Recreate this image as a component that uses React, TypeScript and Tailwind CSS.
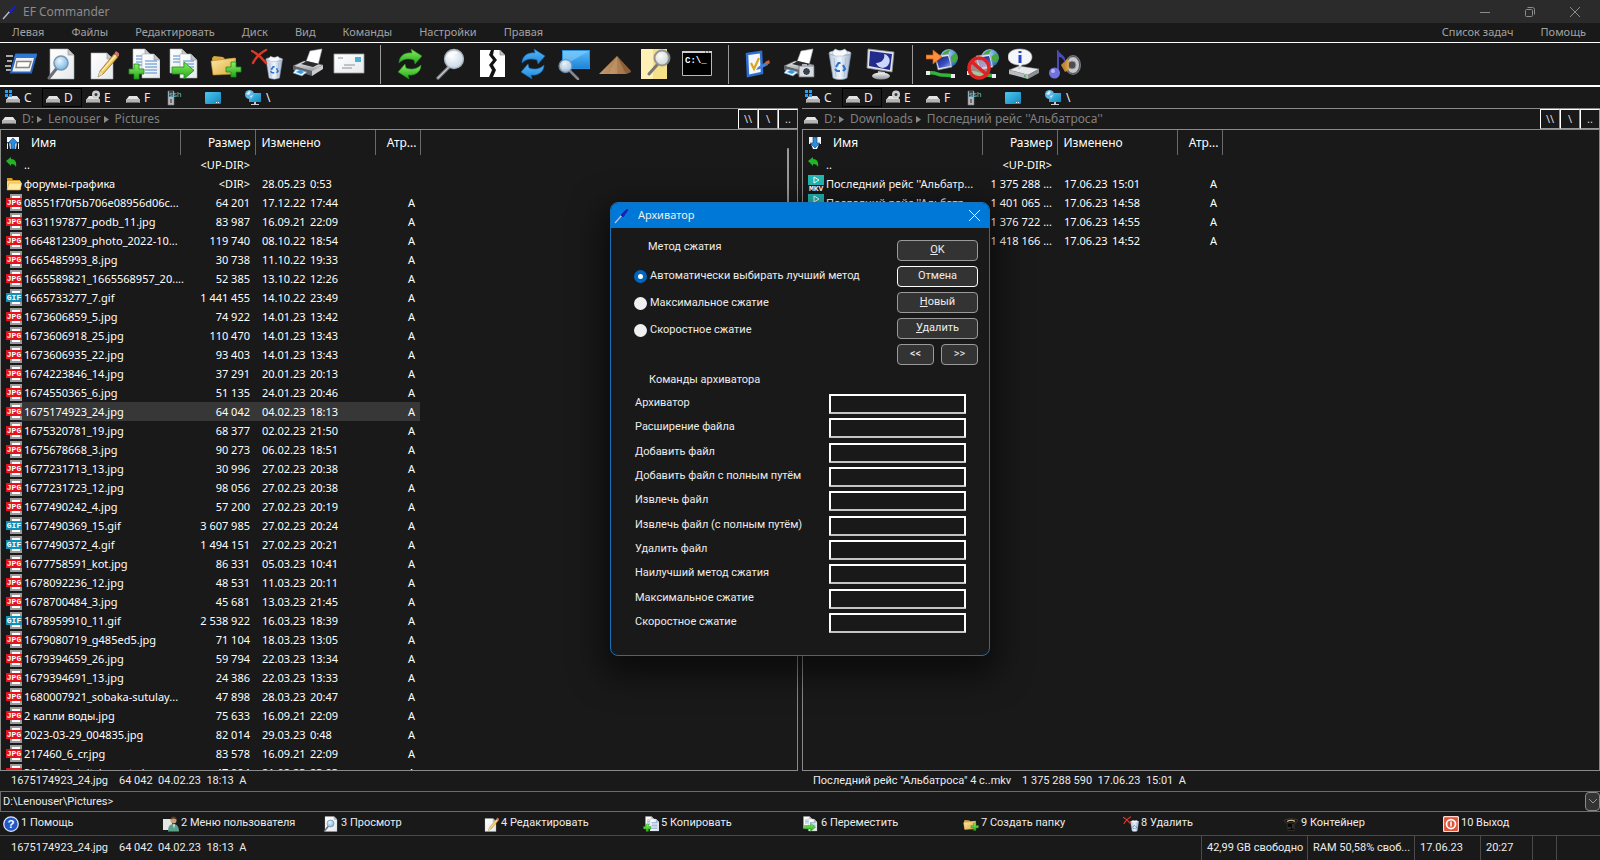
import type { ReactNode } from "react";
import { clsx } from "clsx";

type FileKind = "up" | "dir" | "jpg" | "gif" | "mkv";

interface FileRow {
  kind: FileKind;
  name: string;
  size: string;
  date?: string;
  time?: string;
  attr?: string;
  selected?: boolean;
}

const file = (name: string, size: string, date: string, time: string): FileRow => ({
  kind: name.endsWith(".gif") ? "gif" : "jpg",
  name,
  size,
  date,
  time,
  attr: "A",
});

const LEFT_FILES: FileRow[] = [
  { kind: "up", name: "..", size: "<UP-DIR>" },
  { kind: "dir", name: "форумы-графика", size: "<DIR>", date: "28.05.23", time: "0:53" },
  file("08551f70f5b706e08956d06c...", "64 201", "17.12.22", "17:44"),
  file("1631197877_podb_11.jpg", "83 987", "16.09.21", "22:09"),
  file("1664812309_photo_2022-10...", "119 740", "08.10.22", "18:54"),
  file("1665485993_8.jpg", "30 738", "11.10.22", "19:33"),
  file("1665589821_1665568957_20....", "52 385", "13.10.22", "12:26"),
  file("1665733277_7.gif", "1 441 455", "14.10.22", "23:49"),
  file("1673606859_5.jpg", "74 922", "14.01.23", "13:42"),
  file("1673606918_25.jpg", "110 470", "14.01.23", "13:43"),
  file("1673606935_22.jpg", "93 403", "14.01.23", "13:43"),
  file("1674223846_14.jpg", "37 291", "20.01.23", "20:13"),
  file("1674550365_6.jpg", "51 135", "24.01.23", "20:46"),
  { ...file("1675174923_24.jpg", "64 042", "04.02.23", "18:13"), selected: true },
  file("1675320781_19.jpg", "68 377", "02.02.23", "21:50"),
  file("1675678668_3.jpg", "90 273", "06.02.23", "18:51"),
  file("1677231713_13.jpg", "30 996", "27.02.23", "20:38"),
  file("1677231723_12.jpg", "98 056", "27.02.23", "20:38"),
  file("1677490242_4.jpg", "57 200", "27.02.23", "20:19"),
  file("1677490369_15.gif", "3 607 985", "27.02.23", "20:24"),
  file("1677490372_4.gif", "1 494 151", "27.02.23", "20:21"),
  file("1677758591_kot.jpg", "86 331", "05.03.23", "10:41"),
  file("1678092236_12.jpg", "48 531", "11.03.23", "20:11"),
  file("1678700484_3.jpg", "45 681", "13.03.23", "21:45"),
  file("1678959910_11.gif", "2 538 922", "16.03.23", "18:39"),
  file("1679080719_g485ed5.jpg", "71 104", "18.03.23", "13:05"),
  file("1679394659_26.jpg", "59 794", "22.03.23", "13:34"),
  file("1679394691_13.jpg", "24 386", "22.03.23", "13:33"),
  file("1680007921_sobaka-sutulay...", "47 898", "28.03.23", "20:47"),
  file("2 капли воды.jpg", "75 633", "16.09.21", "22:09"),
  file("2023-03-29_004835.jpg", "82 014", "29.03.23", "0:48"),
  file("217460_6_cr.jpg", "83 578", "16.09.21", "22:09"),
  file("304361_krinitska_nata.jpg", "47 994", "21.02.23", "23:03"),
];

const mkv = (size: string, time: string): FileRow => ({
  kind: "mkv",
  name: "Последний рейс ''Альбатр...",
  size,
  date: "17.06.23",
  time,
  attr: "A",
});

const RIGHT_FILES: FileRow[] = [
  { kind: "up", name: "..", size: "<UP-DIR>" },
  mkv("1 375 288 ...", "15:01"),
  mkv("1 401 065 ...", "14:58"),
  mkv("1 376 722 ...", "14:55"),
  mkv("1 418 166 ...", "14:52"),
];

/* ---------- icons ---------- */

function Svg({ size = 32, children }: { size?: number; children: ReactNode }) {
  return (
    <svg width={size} height={size} viewBox="0 0 32 32" aria-hidden="true" className="shrink-0">
      {children}
    </svg>
  );
}

function Defs() {
  return (
    <svg width="0" height="0" className="absolute" aria-hidden="true">
      <defs>
        <linearGradient id="paper" x1="0" y1="0" x2="1" y2="1">
          <stop offset="0" stopColor="#ffffff" />
          <stop offset="1" stopColor="#e6e9ec" />
        </linearGradient>
        <radialGradient id="lens" cx="0.4" cy="0.35" r="0.7">
          <stop offset="0" stopColor="#ffffff" />
          <stop offset="1" stopColor="#c3d3e2" />
        </radialGradient>
        <radialGradient id="lensBlue" cx="0.4" cy="0.35" r="0.7">
          <stop offset="0" stopColor="#e8f6ff" />
          <stop offset="1" stopColor="#6fb2e2" />
        </radialGradient>
        <linearGradient id="green" x1="0" y1="0" x2="0" y2="1">
          <stop offset="0" stopColor="#8df05e" />
          <stop offset="1" stopColor="#1fa51d" />
        </linearGradient>
        <linearGradient id="blue" x1="0" y1="0" x2="0" y2="1">
          <stop offset="0" stopColor="#58baf8" />
          <stop offset="1" stopColor="#1f84d8" />
        </linearGradient>
        <linearGradient id="folder" x1="0" y1="0" x2="1" y2="1">
          <stop offset="0" stopColor="#ffeaa8" />
          <stop offset="1" stopColor="#d9a93c" />
        </linearGradient>
        <linearGradient id="metal" x1="0" y1="0" x2="0" y2="1">
          <stop offset="0" stopColor="#f5f5f5" />
          <stop offset="1" stopColor="#8d8f92" />
        </linearGradient>
        <linearGradient id="bin" x1="0" y1="0" x2="1" y2="0">
          <stop offset="0" stopColor="#b8c8dc" />
          <stop offset="0.5" stopColor="#eef4fa" />
          <stop offset="1" stopColor="#9db0c8" />
        </linearGradient>
        <radialGradient id="globe" cx="0.35" cy="0.3" r="0.8">
          <stop offset="0" stopColor="#b6e4ff" />
          <stop offset="1" stopColor="#165fae" />
        </radialGradient>
        <linearGradient id="screen" x1="0" y1="0" x2="1" y2="1">
          <stop offset="0" stopColor="#141a6e" />
          <stop offset="0.6" stopColor="#3a4fc0" />
          <stop offset="1" stopColor="#a8b6f5" />
        </linearGradient>
        <linearGradient id="mountain" x1="0" y1="0" x2="1" y2="0">
          <stop offset="0" stopColor="#c69a6a" />
          <stop offset="1" stopColor="#9b6d42" />
        </linearGradient>
        <linearGradient id="cyan" x1="0" y1="0" x2="1" y2="1">
          <stop offset="0" stopColor="#4fc8ee" />
          <stop offset="1" stopColor="#1186bd" />
        </linearGradient>
      </defs>
    </svg>
  );
}

const Page = ({ x = 4, y = 1, w = 24, h = 30 }) => (
  <g>
    <path d={`M${x} ${y}h${w - 6}l6 6v${h - 6}h-${w}z`} fill="url(#paper)" stroke="#a9adb3" strokeWidth="0.6" />
    <path d={`M${x + w - 6} ${y}v6h6z`} fill="#c3c7cc" stroke="#8d9196" strokeWidth="0.6" />
  </g>
);

const TextLines = ({ x, y, w, n }: { x: number; y: number; w: number; n: number }) => (
  <g stroke="#4f8ad0" strokeWidth="1">
    {Array.from({ length: n }, (_, i) => (
      <path key={i} d={`M${x} ${y + i * 3}h${w}`} />
    ))}
  </g>
);

const Plus = ({ x, y }: { x: number; y: number }) => (
  <path
    d={`M${x + 5} ${y}h5v5h5v5h-5v5h-5v-5h-5v-5h5z`}
    fill="url(#green)"
    stroke="#1c8a1a"
    strokeWidth="0.8"
  />
);

const ArrowR = () => (
  <path d="M3 19h12v-5l10 8.500-10 8.500v-5h-12z" fill="url(#green)" stroke="#1c8a1a" strokeWidth="0.8" />
);

const Recycle = ({ x, y }: { x: number; y: number }) => (
  <g transform={`translate(${x} ${y})`} fill="none" stroke="#2f73cf" strokeWidth="2.200">
    <path d="M1 5l2.500-4h2M8 3l2 4-2 2M5 9H2L0 7" />
  </g>
);

const Magnifier = () => (
  <g>
    <path d="M14 19L3 30" stroke="#6c6f73" strokeWidth="3.500" strokeLinecap="round" />
    <path d="M14 19L3 30" stroke="#c9ccd0" strokeWidth="1.300" strokeLinecap="round" />
    <circle cx="19" cy="11" r="9.500" fill="url(#lens)" stroke="#a7adb5" strokeWidth="1.300" />
    <path d="M13 9a7 6 0 0 1 9-4" stroke="#fff" strokeWidth="1.500" fill="none" opacity="0.9" />
  </g>
);

const Refresh = ({ fill, edge }: { fill: string; edge: string }) => (
  <g fill={fill} stroke={edge} strokeWidth="0.6">
    <path d="M5 15C5 8 11 4 18 5l-1-4 11 7-7 8-1-4c-6-2-11-1-15 3z" />
    <path d="M27 17c0 7-6 11-13 10l1 4-11-7 7-8 1 4c6 2 11 1 15-3z" />
  </g>
);

const Printer = () => (
  <g>
    <path d="M18 3l12-2-4 16-12-3z" fill="#fff" stroke="#b3b6ba" strokeWidth="0.6" />
    <path d="M1 18l11-5 19 4-11 7z" fill="url(#metal)" stroke="#5b5e63" strokeWidth="0.6" />
    <path d="M9 16l6-3 12 3-6 3z" fill="#2a2c30" />
    <path d="M1 18l19 5v5L1 22z" fill="#5f6369" />
    <path d="M20 23l11-6v4l-11 7z" fill="#c9ccd0" />
    <path d="M4 21l11 3-5 4-9-3z" fill="#eaf5ff" stroke="#5b8ec2" strokeWidth="0.6" />
    <path d="M4 24l4-2 4 2-3 2z" fill="#2e9ce0" />
  </g>
);

const Bin = ({ x = 6, y = 2, s = 1 }) => (
  <g transform={`translate(${x} ${y}) scale(${s})`}>
    <path d="M0 3h22l-4 25c-4 2-10 2-14 0z" fill="url(#bin)" stroke="#8798ad" strokeWidth="0.7" />
    <ellipse cx="11" cy="3" rx="11" ry="2.500" fill="#dfe9f3" stroke="#8fa1b8" strokeWidth="0.8" />
    <path d="M3 3l3-4 5 2 5-2 3 4-5 3H6z" fill="#f6f9fc" stroke="#a3b2c4" strokeWidth="0.5" />
    <path d="M5 8l2 19M17 8l-2 19" stroke="#9fb3cb" strokeWidth="0.7" />
    <Recycle x={6} y={12} />
  </g>
);

const Globe = ({ cx, cy, r }: { cx: number; cy: number; r: number }) => (
  <g>
    <circle cx={cx} cy={cy} r={r} fill="url(#globe)" />
    <path
      d={`M${cx - r + 2} ${cy - 3}c2-4 5-5 8-5l-2 4-3 2 1 3-3 1zM${cx + 2} ${cy - 2}l5-3 2 5-3 5-4-3z`}
      fill="#48a83e"
    />
  </g>
);

const NetMonitor = () => (
  <g>
    <Globe cx={23} cy={10} r={9} />
    <path d="M9 8l14-2 3 13-14 3z" fill="#e3e7ee" stroke="#8a93a3" strokeWidth="0.6" />
    <path d="M10 10l12-2 3 10-12 2z" fill="url(#screen)" />
    <path d="M3 25c7-1 8 2 13 2s7 0 10 1" stroke="#2fb53a" strokeWidth="3.500" fill="none" />
    <path d="M0 23h4v4H0zM25 26h4v4h-4z" fill="#e9ecef" />
  </g>
);

const UserWindow = () => (
  <g>
    <path d="M1 8h7M2 13h5M0 18h6M1 22h5" stroke="#dadada" strokeWidth="1.300" />
    <path d="M11 6.500h20l-5 18H6z" fill="#eef3f9" stroke="#2c65b8" strokeWidth="2" />
    <path d="M11 6h21l-1 4H9z" fill="#2f78d8" />
    <path d="M12 13.500h14l-2 6H11z" fill="#fff" stroke="#8b8577" strokeWidth="1.500" />
  </g>
);

const EditPage = () => (
  <g>
    <Page x={4} y={5} w={22} h={26} />
    <path d="M13 23L27 6l4 3-15 17-5 3z" fill="#f2c75c" stroke="#8c6a20" strokeWidth="0.8" />
    <path d="M15 23L29 7" stroke="#fff0b8" strokeWidth="1.200" />
    <path d="M27 6l2-3 4 3-2 3z" fill="#d76a6a" />
    <path d="M13 23l-2 6 5-3z" fill="#e8d9b8" />
  </g>
);

const ViewPage = () => (
  <g>
    <Page />
    <path d="M11 20L3 30" stroke="#6c6f73" strokeWidth="3" strokeLinecap="round" />
    <circle cx="15" cy="15" r="7" fill="url(#lensBlue)" stroke="#7d93ab" strokeWidth="1.500" />
  </g>
);

const CopyPages = () => (
  <g>
    <Page x={5} y={1} w={18} h={24} />
    <TextLines x={8} y={8} w={8} n={4} />
    <Page x={14} y={6} w={18} h={24} />
    <TextLines x={17} y={13} w={12} n={5} />
    <Plus x={1} y={16} />
  </g>
);

const MovePages = () => (
  <g>
    <Page x={1} y={1} w={18} h={24} />
    <TextLines x={4} y={8} w={8} n={3} />
    <Page x={11} y={6} w={17} h={24} />
    <TextLines x={14} y={13} w={11} n={4} />
    <ArrowR />
  </g>
);

const NewFolder = () => (
  <g>
    <path d="M2 10l2-2 9 1 2 2 11-1v14L4 27z" fill="#d9a93c" />
    <path d="M1 13l24-3v16L3 27z" fill="url(#folder)" stroke="#b88b2c" strokeWidth="0.6" />
    <Plus x={16} y={14} />
  </g>
);

const DeleteBin = () => (
  <g>
    <Bin x={15} y={9} s={0.75} />
    <path d="M1 3c6 3 10 7 14 12M15 2C9 5 5 9 2 15" stroke="#d83a26" strokeWidth="2.500" fill="none" strokeLinecap="round" />
  </g>
);

const Envelope = () => (
  <g>
    <path d="M1 6h30v19H1z" fill="url(#paper)" stroke="#9a9da1" strokeWidth="0.8" />
    <path d="M22 9h6v5h-6z" fill="#46b3d6" />
    <path d="M5 10h5M11 17h11M9 20h10" stroke="#8d9298" strokeWidth="1" />
    <path d="M0 8h1M0 12h1M0 16h1M0 20h1" stroke="#555" />
  </g>
);

const SplitPage = () => (
  <g>
    <path d="M4 2h11l-2 5 4 5-4 5 3 5-3 7H4z" fill="#fff" />
    <path d="M18 2h6l5 5v22H17l3-7-3-5 4-5-4-5z" fill="#fff" />
    <path d="M24 2v5h5z" fill="#c3c7cc" stroke="#777" strokeWidth="0.6" />
    <path d="M16 2l-1 5 4 5-4 5 3 5-3 7" stroke="#111" strokeWidth="1.800" fill="none" />
  </g>
);

const ScreenSearch = () => (
  <g>
    <path d="M4 2h28v19H4z" fill="#2b8fe0" />
    <path d="M5 3h26v17H5z" fill="url(#blue)" />
    <path d="M5 3h26L5 18z" fill="#8fd4ff" opacity="0.5" />
    <path d="M12 23l8 8" stroke="#85888d" strokeWidth="2.500" strokeLinecap="round" />
    <circle cx="7.500" cy="18" r="6.500" fill="url(#lens)" opacity="0.85" stroke="#6f97bd" strokeWidth="1.300" />
  </g>
);

const Mountain = () => (
  <g>
    <path d="M0 26L18 8l14 16-5 2z" fill="url(#mountain)" />
    <path d="M18 8l14 15-5 3z" fill="#8a5f3a" />
    <path d="M18 8l-8 18h8z" fill="#d0a67a" opacity="0.4" />
  </g>
);

const NoteSearch = () => (
  <g>
    <path d="M1 1h26v30H1z" fill="#f7e08a" />
    <path d="M1 1h12v30H1z" fill="#fff0b5" />
    <path d="M17 17L9 26" stroke="#777" strokeWidth="3" strokeLinecap="round" />
    <circle cx="22" cy="10" r="7.500" fill="url(#lens)" opacity="0.9" stroke="#8d8f93" strokeWidth="2" />
  </g>
);

const Console = () => (
  <g>
    <path d="M1.500 3.500h29v24h-29z" fill="#000" stroke="#b9b9b9" />
    <path d="M1 3h30v2H1z" fill="#d0d0d0" />
    <path d="M24 4h1M27 4h1" stroke="#333" />
    <text x="4" y="15" fontSize="9" fill="#fff" fontFamily="Liberation Mono, monospace" fontWeight="bold">C:\_</text>
  </g>
);

const Checklist = () => (
  <g>
    <path d="M5 6l14-2 1 21-14 3z" fill="#f4f7fb" stroke="#2f6fd0" strokeWidth="2.500" />
    <path d="M9 15l3 6 5-11" fill="none" stroke="#d9a520" strokeWidth="2.200" />
    <path d="M16 19l8-5 2 3-8 4-4 1z" fill="#3f82d8" />
    <path d="M23 14l4-2 1 3-3 2z" fill="#d05c3a" />
  </g>
);

const PrinterCamera = () => (
  <g>
    <Printer />
    <path d="M16 18h15v11H16z" fill="#d8dce2" stroke="#6a6e75" strokeWidth="0.8" />
    <circle cx="23.500" cy="23.500" r="4" fill="#3a424e" stroke="#fff" strokeWidth="1" />
    <path d="M19 16h5v2h-5z" fill="#aeb3ba" />
  </g>
);

const MoonMonitor = () => (
  <g>
    <path d="M3 1l26 3-2 20-25-4z" fill="#e3e6ea" stroke="#8b8f96" strokeWidth="0.8" />
    <path d="M5 3l22 3-2 16-21-4z" fill="#232b8c" />
    <path d="M19 6a7 7 0 1 1-8 9 8 7 0 0 0 8-9z" fill="#cdd6fb" />
    <path d="M13 23l7 1v3h-7z" fill="#b8bcc2" />
    <ellipse cx="16" cy="28" rx="9" ry="3.500" fill="url(#metal)" />
  </g>
);

const Connect = () => (
  <g>
    <NetMonitor />
    <path d="M0 7h7V2l9 7-9 7v-5H0z" fill="#ff8d3a" stroke="#c65a12" strokeWidth="0.7" />
  </g>
);

const Disconnect = () => (
  <g>
    <NetMonitor />
    <circle cx="12" cy="20" r="10" fill="#f6d2d2" fillOpacity="0.6" stroke="#dd2323" strokeWidth="3.500" />
    <path d="M5 14l14 12" stroke="#dd2323" strokeWidth="3.500" />
  </g>
);

const DiskInfo = () => (
  <g>
    <path d="M1 22l10-4 20 3-11 6z" fill="#e7e9eb" stroke="#888" strokeWidth="0.5" />
    <path d="M1 22l19 5v4L1 26z" fill="#b9bdc1" />
    <path d="M20 27l11-6v4l-11 6z" fill="#8b9094" />
    <path d="M16 27l2 .5v2l-2-.5z" fill="#3cc23c" />
    <path d="M12 1c7 0 12 3 12 8s-5 8-10 8l-3 4v-4C5 17 0 14 0 9s5-8 12-8z" fill="#f4f6f8" stroke="#a4a8ad" strokeWidth="0.6" />
    <path d="M12 3v2M12 7v8" stroke="#2746c8" strokeWidth="3" />
  </g>
);

const Sound = () => (
  <g>
    <ellipse cx="24" cy="17" rx="8" ry="10" fill="#77797d" />
    <ellipse cx="24" cy="17" rx="6.500" ry="8.500" fill="#c6c8cb" stroke="#4e5054" />
    <circle cx="23" cy="17" r="4" fill="#4b4d50" stroke="#999" />
    <path d="M12 17l6-6 2 2v9l-4 2z" fill="#e6a33c" opacity="0.8" />
    <path d="M9 2c2 5 9 5 7 13-1-4-4-6-6-6v16H8V2z" fill="#4a4ab8" />
    <circle cx="5.500" cy="25" r="5.500" fill="#7272dd" />
    <circle cx="4" cy="23" r="2" fill="#b8b8ff" />
  </g>
);

const TOOLBAR: { label: string; icon: ReactNode }[][] = [
  [
    { label: "Меню", icon: <UserWindow /> },
    { label: "Просмотр", icon: <ViewPage /> },
    { label: "Редактировать", icon: <EditPage /> },
    { label: "Копировать", icon: <CopyPages /> },
    { label: "Переместить", icon: <MovePages /> },
    { label: "Создать папку", icon: <NewFolder /> },
    { label: "Удалить", icon: <DeleteBin /> },
    { label: "Печать", icon: <Printer /> },
    { label: "Почта", icon: <Envelope /> },
  ],
  [
    { label: "Обновить", icon: <Refresh fill="url(#green)" edge="#1c8a1a" /> },
    { label: "Поиск", icon: <Magnifier /> },
    { label: "Разделить", icon: <SplitPage /> },
    { label: "Синхронизация", icon: <Refresh fill="url(#blue)" edge="#1668b4" /> },
    { label: "Экран", icon: <ScreenSearch /> },
    { label: "Упаковать", icon: <Mountain /> },
    { label: "Найти в файлах", icon: <NoteSearch /> },
    { label: "Консоль", icon: <Console /> },
  ],
  [
    { label: "Свойства", icon: <Checklist /> },
    { label: "Снимок", icon: <PrinterCamera /> },
    { label: "Корзина", icon: <Bin x={5} y={2} /> },
    { label: "Заставка", icon: <MoonMonitor /> },
  ],
  [
    { label: "Подключить", icon: <Connect /> },
    { label: "Отключить", icon: <Disconnect /> },
    { label: "О диске", icon: <DiskInfo /> },
    { label: "Звук", icon: <Sound /> },
  ],
];

function DriveIcon({ extra }: { extra?: "win" | "cd" }) {
  return (
    <svg width="16" height="16" viewBox="0 0 16 16" aria-hidden="true" className="shrink-0">
      <path d="M4 6h8l3 4H1z" fill="#e4e4e4" />
      <rect x="1" y="9" width="14" height="4" rx="1" fill="#b4b4b4" />
      <path d="M2 12.500h12" stroke="#6c6c6c" />
      {extra === "win" && <path d="M0 0h3v3H0zM4 0h3v3H4zM0 4h3v3H0zM4 4h3v3H4z" fill="#2a9df4" />}
      {extra === "cd" && (
        <g>
          <circle cx="11" cy="4.500" r="4" fill="#cfcfcf" />
          <circle cx="11" cy="4.500" r="1.500" fill="#3a3a3a" />
        </g>
      )}
    </svg>
  );
}

function FeatherIcon() {
  return (
    <svg width="16" height="16" viewBox="0 0 16 16" aria-hidden="true" className="shrink-0">
      <path d="M1 15l7-8" stroke="#b9bdd8" strokeWidth="1.300" />
      <path d="M7 7l6-6 1 1-5 7z" fill="#1a20b4" stroke="#1a20b4" />
    </svg>
  );
}

function FileIcon({ kind }: { kind: FileKind }) {
  if (kind === "up") {
    return (
      <svg width="16" height="16" viewBox="0 0 16 16" aria-hidden="true">
        <path d="M0 4l5-4v2c4 0 6 3 5 8-1-2-2-3-5-3v2z" fill="#22b422" />
      </svg>
    );
  }
  if (kind === "dir") {
    return (
      <svg width="16" height="16" viewBox="0 0 16 16" aria-hidden="true">
        <path d="M1 2h5l1 2h7v3H1z" fill="#d99a25" />
        <rect x="1" y="5" width="14" height="9" rx="1" fill="#f8d877" />
        <path d="M3 7h13l-2 7H1z" fill="#ffe9a3" stroke="#d9a534" strokeWidth="0.6" />
      </svg>
    );
  }
  if (kind === "mkv") {
    return (
      <svg width="16" height="17" viewBox="0 0 16 17" aria-hidden="true">
        <rect width="16" height="10" fill="#22b8b4" />
        <path d="M6 2l5 3-5 3z" fill="none" stroke="#fff" />
        <text x="1" y="16" fontSize="8" fill="#fff" fontFamily="Liberation Mono, monospace" fontWeight="bold">
          MKV
        </text>
      </svg>
    );
  }
  return (
    <svg width="16" height="17" viewBox="0 0 16 17" aria-hidden="true">
      <path d="M4 0h12v17H4z" fill="#9a9a9a" />
      <path d="M6 2h8v13H6z" fill="#fff" />
      <rect y="4" width="16" height="9" fill={kind === "jpg" ? "#e5131b" : "#1291b8"} />
      <text
        x="8"
        y="11"
        fontSize="8"
        textAnchor="middle"
        fill="#fff"
        fontFamily="Liberation Mono, monospace"
        fontWeight="bold"
      >
        {kind === "jpg" ? "JPG" : "GIF"}
      </text>
    </svg>
  );
}

function SortIcon({ down }: { down?: boolean }) {
  return (
    <svg width="12" height="12" viewBox="0 0 12 12" aria-hidden="true">
      <rect width="12" height="12" fill="#f4f8fc" />
      <path d={down ? "M0 7h2l2 5H0zM12 7h-2l-2 5h4z" : "M0 5h2l1 7H1V7zM12 5h-2l-1 7h2V7z"} fill="#14181e" />
      <path
        d={down ? "M4 0h4v6h3l-5 5-5-5h3z" : "M4 12h4V6h3L6 1 1 6h3z"}
        fill="#2a8de0"
        stroke="#173a6a"
        strokeWidth="0.6"
      />
    </svg>
  );
}

/* ---------- window chrome ---------- */

function TitleBar() {
  return (
    <header className="flex h-[23px] items-center bg-[#2b2b2b] pl-0.5 text-[#8c8c8c]">
      <FeatherIcon />
      <h1 className="ml-[5px] flex-1 text-[12px]">EF Commander</h1>
      <button type="button" aria-label="Свернуть" className="grid h-full w-[45px] place-items-center">
        <svg width="10" height="10" viewBox="0 0 10 10"><path d="M0 5.500h10" stroke="currentColor" /></svg>
      </button>
      <button type="button" aria-label="Восстановить" className="grid h-full w-[45px] place-items-center">
        <svg width="10" height="10" viewBox="0 0 10 10" fill="none" stroke="currentColor">
          <rect x="0.500" y="2.500" width="7" height="7" rx="1" />
          <path d="M2.500 0.500h5a2 2 0 0 1 2 2v5" />
        </svg>
      </button>
      <button type="button" aria-label="Закрыть" className="mr-0.5 grid h-full w-[46px] place-items-center">
        <svg width="10" height="10" viewBox="0 0 10 10"><path d="M0 0l10 10M10 0L0 10" stroke="currentColor" /></svg>
      </button>
    </header>
  );
}

function MenuBar() {
  const left = ["Левая", "Файлы", "Редактировать", "Диск", "Вид", "Команды", "Настройки", "Правая"];
  return (
    <nav className="flex h-[19px] items-center justify-between pl-3 pr-[14px] text-[11px] text-[#a2a2a2]">
      <div className="flex gap-[27px]">
        {left.map((m) => (
          <button key={m} type="button">{m}</button>
        ))}
      </div>
      <div className="flex gap-[27px]">
        <button type="button">Список задач</button>
        <button type="button">Помощь</button>
      </div>
    </nav>
  );
}

function Toolbar() {
  return (
    <div role="toolbar" className="flex h-[45px] items-center border-t border-b-2 border-white">
      {TOOLBAR.map((group, i) => (
        <div key={i} className="flex items-center">
          {i > 0 && <span className="ml-[11px] mr-2 h-[39px] w-px bg-[#9a9a9a]" />}
          {group.map((t) => (
            <button key={t.label} type="button" aria-label={t.label} className="grid h-10 w-[41px] place-items-center">
              <Svg>{t.icon}</Svg>
            </button>
          ))}
        </div>
      ))}
    </div>
  );
}

function DriveBar() {
  const drives = [
    { l: "C", extra: "win" as const },
    { l: "D" },
    { l: "E", extra: "cd" as const },
    { l: "F" },
  ];
  return (
    <div className="flex h-[21px] items-center pl-[2px] text-[12px]">
      {drives.map((d) => (
        <button
          key={d.l}
          type="button"
          className={clsx(
            "flex h-[19px] w-10 items-center gap-[3px] border pl-[2px]",
            d.l === "D" ? "border-black" : "border-transparent",
          )}
        >
          <DriveIcon extra={d.extra} />
          {d.l}
        </button>
      ))}
      <button type="button" aria-label="SSH" className="grid h-[19px] w-6 place-items-center">
        <svg width="16" height="16" viewBox="0 0 16 16">
          <path d="M2 1h6v14H2z" fill="#b4b7bb" stroke="#77797d" strokeWidth="0.600" />
          <path d="M5 9v4" stroke="#55585c" strokeWidth="1.500" />
          <path d="M3 1h4v6H3z" fill="#3f4a52" />
          <text x="3" y="7" fontSize="8" fill="#5cc0ee" fontFamily="Liberation Sans, sans-serif">ssh</text>
        </svg>
      </button>
      <button type="button" aria-label="Рабочий стол" className="ml-[15px] grid h-[19px] w-6 place-items-center">
        <svg width="16" height="14" viewBox="0 0 16 14">
          <rect y="1" width="16" height="12" rx="1" fill="url(#cyan)" />
          <path d="M11 11.500h1M13 11.500h1" stroke="#fff" />
        </svg>
      </button>
      <button type="button" className="ml-5 flex h-[19px] items-center gap-1">
        <svg width="17" height="16" viewBox="0 0 17 16" aria-hidden="true">
          <path d="M4 3h12v9H4z" fill="url(#cyan)" />
          <path d="M9 12h2v2h3v1H6v-1h3z" fill="#c7cbd0" />
          <circle cx="4.500" cy="4.500" r="4.500" fill="#5db4e6" />
          <path d="M1 4l3-3 2 1-2 3zM5 6l3-1-2 3z" fill="#d5eefb" />
        </svg>
        \
      </button>
    </div>
  );
}

function PathBar({ parts }: { parts: string[] }) {
  return (
    <div className="flex h-[22px] items-center border-y border-[#8a8a8a] pl-px text-[12px] text-[#808080]">
      <DriveIcon />
      <div className="ml-[5px] flex flex-1 items-center">
        {parts.map((p, i) => (
          <span key={p} className="flex items-center">
            {i > 0 && (
              <svg width="5" height="7" viewBox="0 0 5 7" aria-hidden="true" className="ml-[3px] mr-[6px]">
                <path d="M0 0l5 3.500L0 7z" fill="#8a8a8a" />
              </svg>
            )}
            {p}
          </span>
        ))}
      </div>
      {["\\\\", "\\", ".."].map((b) => (
        <button
          key={b}
          type="button"
          className="h-5 w-5 border border-[#9a9a9a] border-l-white border-t-white text-center text-[11px] leading-4 text-[#d8d8d8]"
        >
          {b}
        </button>
      ))}
    </div>
  );
}

function FileTable({ rows, down }: { rows: FileRow[]; down?: boolean }) {
  return (
    <table className="w-[419px] table-fixed border-collapse text-[11px] leading-[19px] text-white">
      <colgroup>
        <col className="w-[20px]" />
        <col className="w-[159px]" />
        <col className="w-[75px]" />
        <col className="w-[120px]" />
        <col className="w-[45px]" />
      </colgroup>
      <thead>
        <tr className="h-[25px] text-[12px]">
          <th colSpan={2} className="border-r border-[#6a6a6a] p-0 pl-[6px] font-normal">
            <span className="flex items-center gap-3">
              <SortIcon down={down} />
              Имя
            </span>
          </th>
          <th className="border-r border-[#6a6a6a] p-0 pr-1 text-right font-normal">Размер</th>
          <th className="border-r border-[#6a6a6a] p-0 pl-[6px] text-left font-normal">Изменено</th>
          <th className="border-r border-[#6a6a6a] p-0 pr-[3px] text-right font-normal">Атр...</th>
        </tr>
      </thead>
      <tbody>
        {rows.map((r, i) => (
          <tr
            key={i}
            className={clsx("h-[19px]", r.selected && "[&>td:not(:first-child)]:bg-[#373737]")}
          >
            <td className="p-0 pl-[5px]">
              <FileIcon kind={r.kind} />
            </td>
            <td className="whitespace-nowrap p-0 pl-[3px]">{r.name}</td>
            <td className="whitespace-nowrap p-0 pr-[5px] text-right">{r.size}</td>
            <td className="p-0 pl-[7px]">
              <span className="inline-block w-12">{r.date}</span>
              {r.time}
            </td>
            <td className="p-0 pr-[5px] text-right">{r.attr}</td>
          </tr>
        ))}
      </tbody>
    </table>
  );
}

function Panel({ path, rows, status, right }: { path: string[]; rows: FileRow[]; status: string; right?: boolean }) {
  return (
    <section className="flex min-h-0 min-w-0 flex-1 flex-col">
      <DriveBar />
      <div className={clsx("flex min-h-0 flex-1 flex-col", right ? "pl-0.5" : "pr-0.5")}>
        <PathBar parts={path} />
        <div className="flex min-h-0 flex-1 items-start justify-between overflow-hidden border-x border-b border-[#8a8a8a]">
          <FileTable rows={rows} down={right} />
          {!right && <span className="mr-2 mt-[18px] h-[200px] w-0.5 rounded-full bg-[#9a9a9a]" />}
        </div>
      </div>
      <p
        className={clsx(
          "h-5 whitespace-pre font-['Roboto',sans-serif] text-[11px] leading-5",
          right ? "pl-[13px]" : "pl-[11px]",
        )}
      >
        {status}
      </p>
    </section>
  );
}

/* ---------- bottom bars ---------- */

const FUNCTION_KEYS: { label: string; icon: ReactNode }[] = [
  {
    label: "1 Помощь",
    icon: (
      <g>
        <circle cx="16" cy="16" r="14.500" fill="#2458c8" stroke="#dfe8fa" strokeWidth="2.500" />
        <text x="16" y="24" fontSize="23" textAnchor="middle" fill="#fff" fontFamily="Liberation Sans, sans-serif" fontWeight="bold">?</text>
      </g>
    ),
  },
  {
    label: "2 Меню пользователя",
    icon: (
      <g>
        <path d="M0 6h18v22H0z" fill="#e4e7e4" />
        <circle cx="21" cy="9" r="6" fill="#caa07a" />
        <path d="M15 7c0-8 12-8 12 0l-6-2z" fill="#5a3a22" />
        <path d="M10 31c0-11 4-15 11-15s11 5 11 15z" fill="#5ba08a" />
        <path d="M20 17l2 8 2-8z" fill="#f3f3f3" />
      </g>
    ),
  },
  { label: "3 Просмотр", icon: <ViewPage /> },
  { label: "4 Редактировать", icon: <EditPage /> },
  { label: "5 Копировать", icon: <CopyPages /> },
  { label: "6 Переместить", icon: <MovePages /> },
  { label: "7 Создать папку", icon: <NewFolder /> },
  { label: "8 Удалить", icon: <DeleteBin /> },
  {
    label: "9 Контейнер",
    icon: (
      <g>
        <path d="M2 9c4-4 24-4 28 0l-5 5H7z" fill="#0a0a0a" stroke="#57504a" strokeWidth="1.500" />
        <path d="M8 11c4-3 13-3 16 0" stroke="#d3b88c" strokeWidth="2.500" fill="none" />
        <path d="M8 14h16l-2 15H10z" fill="#080808" stroke="#4a4540" />
        <path d="M10 24h6M20 16v9" stroke="#7b6d5c" strokeWidth="1.500" />
      </g>
    ),
  },
  {
    label: "10 Выход",
    icon: (
      <g>
        <rect x="1" y="1" width="30" height="30" rx="3" fill="#e0543a" stroke="#ffd9cf" strokeWidth="2.500" />
        <circle cx="16" cy="16" r="9" fill="none" stroke="#fff" strokeWidth="3.500" />
        <path d="M16 11v10" stroke="#fff" strokeWidth="3" />
      </g>
    ),
  },
];

function BottomBars() {
  const cell = "flex items-center overflow-hidden whitespace-nowrap border-l border-[#4a4a4a] pl-[5px]";
  return (
    <footer className="font-['Roboto',sans-serif] text-[11px]">
      <div className="flex h-[21px] items-stretch border-y border-l border-[#6c6c6c]">
        <label htmlFor="cmd" className="pl-0.5 leading-[19px]">D:\Lenouser\Pictures&gt;</label>
        <input id="cmd" type="text" className="min-w-0 flex-1 bg-transparent outline-none" />
        <button type="button" aria-label="История" className="grid w-[15px] place-items-center rounded border border-[#8a8a8a] bg-[#333]">
          <svg width="8" height="5" viewBox="0 0 8 5"><path d="M0 0l4 4 4-4" stroke="#9a9a9a" fill="none" /></svg>
        </button>
      </div>
      <div className="grid h-[23px] grid-cols-10">
        {FUNCTION_KEYS.map((k) => (
          <button key={k.label} type="button" className="flex items-center gap-[2px] whitespace-nowrap pl-[3px]">
            <Svg size={16}>{k.icon}</Svg>
            {k.label}
          </button>
        ))}
      </div>
      <div className="flex h-[25px] border-t border-[#4a4a4a]">
        <span className="flex flex-1 items-center whitespace-pre pl-[11px]">{"1675174923_24.jpg    64 042  04.02.23  18:13  A"}</span>
        <span className={clsx(cell, "w-[106px]")}>42,99 GB свободно</span>
        <span className={clsx(cell, "w-[107px]")}>RAM 50,58% своб...</span>
        <span className={clsx(cell, "w-[66px]")}>17.06.23</span>
        <span className={clsx(cell, "w-[52px]")}>20:27</span>
        <span className={clsx(cell, "w-6")} />
        <span className={clsx(cell, "w-11")} />
      </div>
    </footer>
  );
}

/* ---------- archiver dialog ---------- */

const METHODS = ["Автоматически выбирать лучший метод", "Максимальное сжатие", "Скоростное сжатие"];

const COMMANDS = [
  "Архиватор",
  "Расширение файла",
  "Добавить файл",
  "Добавить файл с полным путём",
  "Извлечь файл",
  "Извлечь файл (с полным путём)",
  "Удалить файл",
  "Наилучший метод сжатия",
  "Максимальное сжатие",
  "Скоростное сжатие",
];

function DialogButton({ children, focus }: { children: ReactNode; focus?: boolean }) {
  return (
    <button
      type="button"
      className={clsx(
        "h-[21px] flex-1 rounded border bg-[#333]",
        focus ? "border-white" : "border-[#9a9a9a]",
      )}
    >
      {children}
    </button>
  );
}

function ArchiverDialog() {
  return (
    <div
      role="dialog"
      aria-label="Архиватор"
      className="w-[380px] overflow-hidden rounded-lg border border-[#1b6fb5] bg-[#191919] font-['Roboto',sans-serif] text-[11px] shadow-[0_12px_32px_8px_rgba(0,0,0,0.55)]"
    >
      <div className="flex h-[25px] items-center bg-[#0078d7] pl-[3px] font-['Noto_Sans',sans-serif]">
        <FeatherIcon />
        <h2 className="ml-2 flex-1 text-[11px]">Архиватор</h2>
        <button type="button" aria-label="Закрыть" className="grid h-full w-[30px] place-items-center">
          <svg width="11" height="11" viewBox="0 0 11 11"><path d="M0 0l11 11M11 0L0 11" stroke="#fff" /></svg>
        </button>
      </div>
      <div className="flex justify-between pl-[23px] pr-[11px] pt-3">
        <fieldset>
          <legend className="pl-[14px] leading-[14px]">Метод сжатия</legend>
          <div className="mt-[9px] flex flex-col">
            {METHODS.map((m, i) => (
              <label key={m} className="flex h-[27px] items-center gap-[3px]">
                <input
                  type="radio"
                  name="method"
                  defaultChecked={i === 0}
                  className="size-[13px] appearance-none rounded-full bg-[#f0f0f0] checked:border-4 checked:border-[#0067c0] checked:bg-white"
                />
                {m}
              </label>
            ))}
          </div>
        </fieldset>
        <div className="flex w-[81px] flex-col gap-[5px]">
          <div className="flex"><DialogButton><u>O</u>K</DialogButton></div>
          <div className="flex"><DialogButton focus>Отмена</DialogButton></div>
          <div className="flex"><DialogButton><u>Н</u>овый</DialogButton></div>
          <div className="flex"><DialogButton><u>У</u>далить</DialogButton></div>
          <div className="flex gap-[7px]">
            <DialogButton>&lt;&lt;</DialogButton>
            <DialogButton>&gt;&gt;</DialogButton>
          </div>
        </div>
      </div>
      <fieldset className="mb-[22px] pl-6 pr-[23px] pt-2">
        <legend className="pl-[14px] pt-2 leading-[13px]">Команды архиватора</legend>
        <div className="flex h-[239px] flex-col justify-between">
          {COMMANDS.map((c, i) => (
            <div key={c} className="flex items-start justify-between">
              <label htmlFor={`cmd-${i}`} className="leading-[17px]">{c}</label>
              <input
                id={`cmd-${i}`}
                type="text"
                className="h-5 w-[137px] rounded-[1px] border-2 border-white border-b-[#c4c4c4] bg-transparent px-1 outline-none"
              />
            </div>
          ))}
        </div>
      </fieldset>
    </div>
  );
}

export default function App() {
  return (
    <div className="relative flex h-screen flex-col overflow-hidden bg-[#191919] font-['Noto_Sans',sans-serif] text-[#ececec]">
      <Defs />
      <TitleBar />
      <MenuBar />
      <Toolbar />
      <main className="flex min-h-0 flex-1">
        <Panel
          path={["D:", "Lenouser", "Pictures"]}
          rows={LEFT_FILES}
          status={"1675174923_24.jpg    64 042  04.02.23  18:13  A"}
        />
        <Panel
          right
          path={["D:", "Downloads", "Последний рейс ''Альбатроса''"]}
          rows={RIGHT_FILES}
          status={"Последний рейс \"Альбатроса\" 4 с..mkv    1 375 288 590  17.06.23  15:01  A"}
        />
      </main>
      <BottomBars />
      <div className="absolute inset-0 flex items-center justify-center pb-0.5">
        <ArchiverDialog />
      </div>
    </div>
  );
}
